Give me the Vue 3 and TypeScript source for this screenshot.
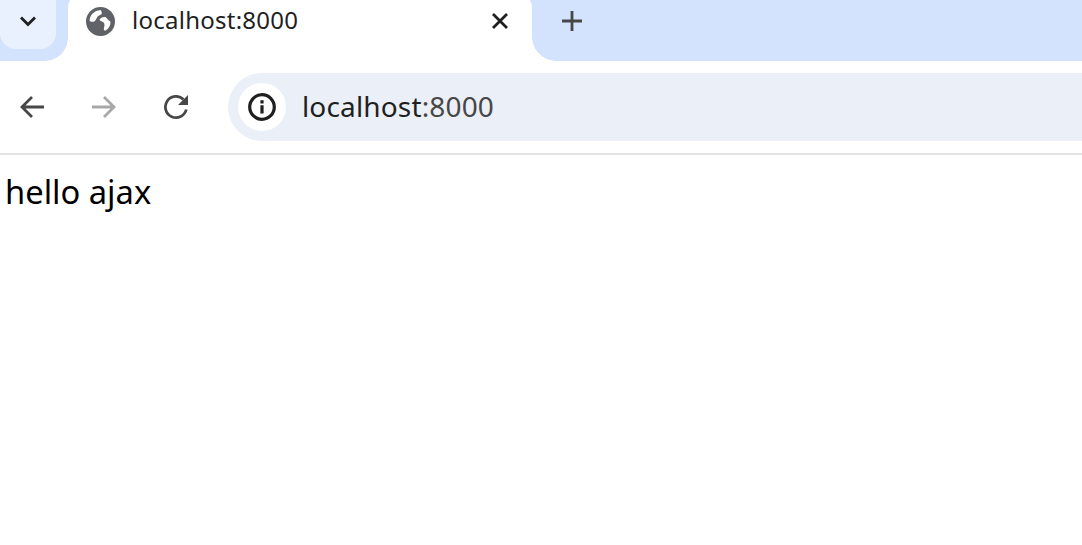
<template>
  <div class="browser">
    <div class="tab-strip">
      <div class="tab-search">
        <button class="search-btn" aria-label="Search tabs">
          <svg viewBox="0 0 18 12" width="18" height="12"><path d="M2 2.500 9 9.500l7-7" fill="none" stroke="#1f1f1f" stroke-width="2.800" /></svg>
        </button>
      </div>
      <div class="tab">
        <svg class="globe" viewBox="0 0 28 28" width="29" height="29">
          <circle cx="14" cy="14" r="14" fill="#5f6368" />
          <path d="M3.500 13C3.500 8 8 3.500 14 3c1.200 1 1.500 2.500 1 4-1 1-3 1-4 2.500-.8 1.500-1.500 3.500-3 4.500-1.700.5-3.500.5-4.500-1z" fill="#fff" />
          <path d="M13.500 11.500c1.500-1.500 4-2.500 5.500-1.500 1.500 1 2 3 4.500 4 .5 3.500-1.500 7-5 9-1.500-.5-1.500-2-1-3.500.5-2 .5-3.500-.5-4.500-1-1-2.500-1.500-3.500-2-.5-.5-.5-1 0-1.500z" fill="#fff" />
        </svg>
        <span class="tab-title">localhost:8000</span>
        <svg class="close" viewBox="0 0 18 18" width="18" height="18"><path d="M2 2l14 14M16 2 2 16" stroke="#1f1f1f" stroke-width="2.800" fill="none" /></svg>
      </div>
      <svg class="plus" viewBox="0 0 20 20" width="20" height="20"><path d="M10 0v20M0 10h20" stroke="#474747" stroke-width="2.800" fill="none" /></svg>
    </div>
    <div class="toolbar">
      <svg class="nav back" viewBox="0 0 26 24" width="26" height="24"><path d="M25 12H3.500M13 2 3 12l10 10" fill="none" stroke="#474747" stroke-width="2.800" /></svg>
      <svg class="nav forward" viewBox="0 0 26 24" width="26" height="24"><path d="M1 12h21.500M13 2l10 10-10 10" fill="none" stroke="#a8a8a8" stroke-width="2.800" /></svg>
      <svg class="nav reload" viewBox="0 0 26 26" width="26" height="26">
        <path d="M23.300 15.500A10.600 10.600 0 1 1 20.500 5.500" fill="none" stroke="#474747" stroke-width="2.800" />
        <path d="M25 1v10H15z" fill="#474747" />
      </svg>
      <div class="omnibox">
        <span class="site-info">
          <svg viewBox="0 0 28 28" width="28" height="28">
            <circle cx="14" cy="14" r="12.300" fill="none" stroke="#1f1f1f" stroke-width="3.200" />
            <path d="M12.400 12.300h3.200v8.200h-3.200zM12.400 7.300h3.200v3.100h-3.200z" fill="#1f1f1f" />
          </svg>
        </span>
        <span class="url">localhost<span class="port">:8000</span></span>
      </div>
    </div>
    <div class="page">hello ajax</div>
  </div>
</template>

<script setup lang="ts">
</script>

<style>
html,
body {
  margin: 0;
  background: #fff;
  overflow: hidden;
}
</style>

<style scoped>
.browser {
  width: 1082px;
  height: 545px;
  overflow: hidden;
  font-family: "Noto Sans", sans-serif;
  background: #fff;
}

.tab-strip {
  display: flex;
  height: 61px;
  background: #d3e3fd;
  overflow: hidden;
}

.tab-search {
  width: 68px;
  flex: none;
}

.search-btn {
  display: flex;
  align-items: center;
  justify-content: center;
  width: 56px;
  height: 49px;
  padding: 0 0 8px;
  box-sizing: border-box;
  border: 0;
  border-radius: 0 0 16px 16px;
  background: #e9f1fe;
}

.tab {
  position: relative;
  display: flex;
  align-items: center;
  width: 464px;
  height: 69px;
  margin-top: -8px;
  padding: 0 23px 12px 18px;
  box-sizing: border-box;
  background: #fff;
  border-radius: 16px 16px 0 0;
  flex: none;
}

.tab::before,
.tab::after {
  content: "";
  position: absolute;
  bottom: 0;
}

.tab::before {
  left: -23px;
  width: 23px;
  height: 23px;
  background: radial-gradient(circle at 0 0, transparent 22.500px, #fff 23px);
}

.tab::after {
  right: -24px;
  width: 24px;
  height: 24px;
  background: radial-gradient(circle at 100% 0, transparent 23.500px, #fff 24px);
}

.globe {
  flex: none;
  margin-top: 1px;
}

.tab-title {
  flex: 1;
  margin-left: 17px;
  padding-bottom: 2px;
  font-size: 24px;
  line-height: 30px;
  letter-spacing: 0.25px;
  color: #1f1f1f;
}

.close {
  flex: none;
}

.plus {
  flex: none;
  margin: 11px 0 0 30px;
}

.toolbar {
  display: flex;
  align-items: center;
  height: 94px;
  padding-left: 19px;
  box-sizing: border-box;
  border-bottom: 2px solid #e3e3e3;
}

.nav {
  flex: none;
}

.forward {
  margin-left: 46px;
}

.reload {
  margin-left: 46px;
}

.omnibox {
  display: flex;
  align-items: center;
  flex: 1;
  height: 68px;
  margin-left: 39px;
  padding-left: 10px;
  box-sizing: border-box;
  background: #ebeff8;
  border-radius: 34px 0 0 34px;
}

.site-info {
  display: flex;
  align-items: center;
  justify-content: center;
  flex: none;
  width: 48px;
  height: 48px;
  border-radius: 50%;
  background: #fff;
}

.url {
  margin-left: 16px;
  padding-bottom: 2px;
  font-size: 28px;
  line-height: 36px;
  letter-spacing: 0.15px;
  color: #1f1f1f;
}

.port {
  color: #474747;
}

.page {
  padding: 17px 0 0 5px;
  font-size: 32.700px;
  line-height: 40px;
  color: #000;
}
</style>
